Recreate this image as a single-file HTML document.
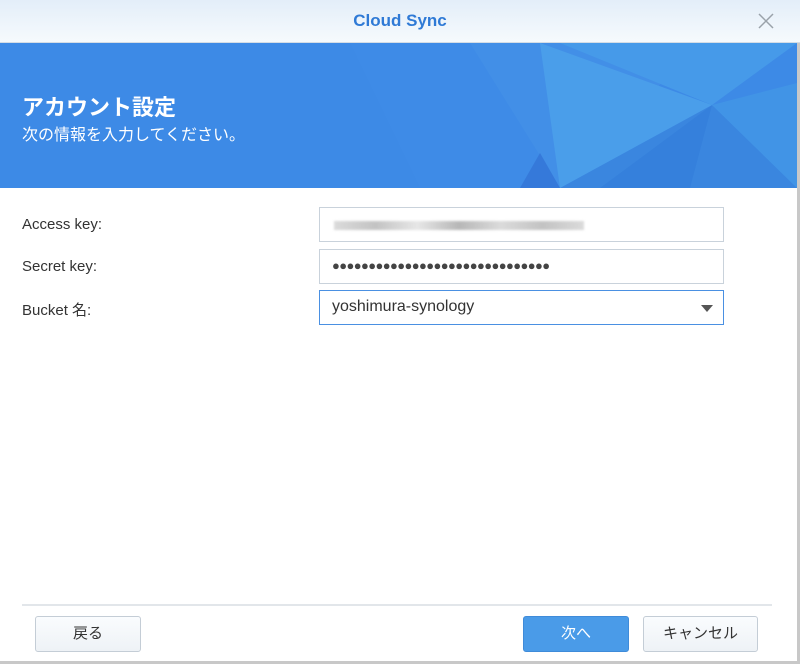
<!DOCTYPE html>
<html><head><meta charset="utf-8"><style>
*{box-sizing:border-box;margin:0;padding:0}
body{width:800px;height:664px;background:#fff;font-family:"Liberation Sans","Noto Sans CJK JP",sans-serif;position:relative;overflow:hidden}
.top{position:absolute;left:0;top:0;width:800px;height:43px;background:linear-gradient(#e3eef9,#f6fafd);border-bottom:1px solid #d4dde6}
.title{position:absolute;left:0;width:800px;top:11px;text-align:center;color:#2f7ad6;font-weight:bold;font-size:17px}
.ban{position:absolute;left:0;top:43px;width:797px;height:145px;background:#3d8ae6;overflow:hidden}
.h1{position:absolute;left:22px;color:#fff;font-size:22px;font-weight:bold}
.h2{position:absolute;left:22px;color:#fff;font-size:16px}
.lbl{position:absolute;left:22px;font-size:15px;color:#333}
.f{position:absolute;left:319px;width:405px;height:35px;border:1px solid #c9d2db;background:#fff}
.rb{position:absolute;right:0;top:43px;width:3px;height:621px;background:#c8c8c8}
.btn{position:absolute;top:616px;height:36px;border:1px solid #c4cdd6;border-radius:3px;background:linear-gradient(#fafcfe,#eef2f6);font-size:15px;color:#333;text-align:center;line-height:34px}
</style></head><body>
<div class="top"><div class="title">Cloud Sync</div>
<svg style="position:absolute;left:758px;top:13px" width="16" height="16"><path d="M1 1L15 15M15 1L1 15" stroke="#9aa2aa" stroke-width="1.5"/></svg></div>
<div class="ban"><svg width="797" height="145" style="position:absolute;left:0;top:0">
<polygon points="350,0 560,0 620,145 420,145" fill="#3f8ce8" opacity=".5"/>
<polygon points="470,0 700,0 560,145" fill="#428fe7"/>
<polygon points="560,0 797,0 712,62" fill="#469ae9"/>
<polygon points="712,62 560,145 797,145" fill="#3a86df"/>
<polygon points="712,62 600,145 690,145" fill="#3580dc"/>
<polygon points="540,0 712,62 560,145" fill="#4a9eea"/>
<polygon points="712,62 797,145 797,40" fill="#4194e6"/>
<polygon points="520,145 560,145 540,110" fill="#3579da"/>
</svg><div class="h1" style="top:47px">アカウント設定</div><div class="h2" style="top:78px">次の情報を入力してください。</div></div>
<div class="lbl" style="top:216px">Access key:</div>
<div class="lbl" style="top:258px">Secret key:</div>
<div class="lbl" style="top:299px">Bucket 名:</div>
<div class="f" style="top:207px"><div style="position:absolute;left:14px;top:13px;width:250px;height:9px;background:linear-gradient(90deg,#ccc,#aaa,#ddd,#999,#ccc,#aaa,#ccc);opacity:.7;filter:blur(1px)"></div></div>
<div class="f" style="top:249px;font-size:13px;color:#444;padding:8px 0 0 12px;letter-spacing:-0.6px">●●●●●●●●●●●●●●●●●●●●●●●●●●●●●●</div>
<div class="f" style="top:290px;border-color:#4a90e2;font-size:16px;color:#333;padding:7px 0 0 12px">yoshimura-synology<div style="position:absolute;right:10px;top:14px;border-left:6px solid transparent;border-right:6px solid transparent;border-top:7px solid #555"></div></div>
<div style="position:absolute;left:22px;top:604px;width:750px;height:2px;background:#e2e6ea"></div>
<div class="btn" style="left:35px;width:106px">戻る</div>
<div class="btn" style="left:523px;width:106px;background:#4a9be8;border-color:#3f8bd9;color:#fff">次へ</div>
<div class="btn" style="left:643px;width:115px">キャンセル</div>
<div class="rb"></div>
<div style="position:absolute;left:0;top:661px;width:800px;height:3px;background:#c8c8c8"></div>
</body></html>
